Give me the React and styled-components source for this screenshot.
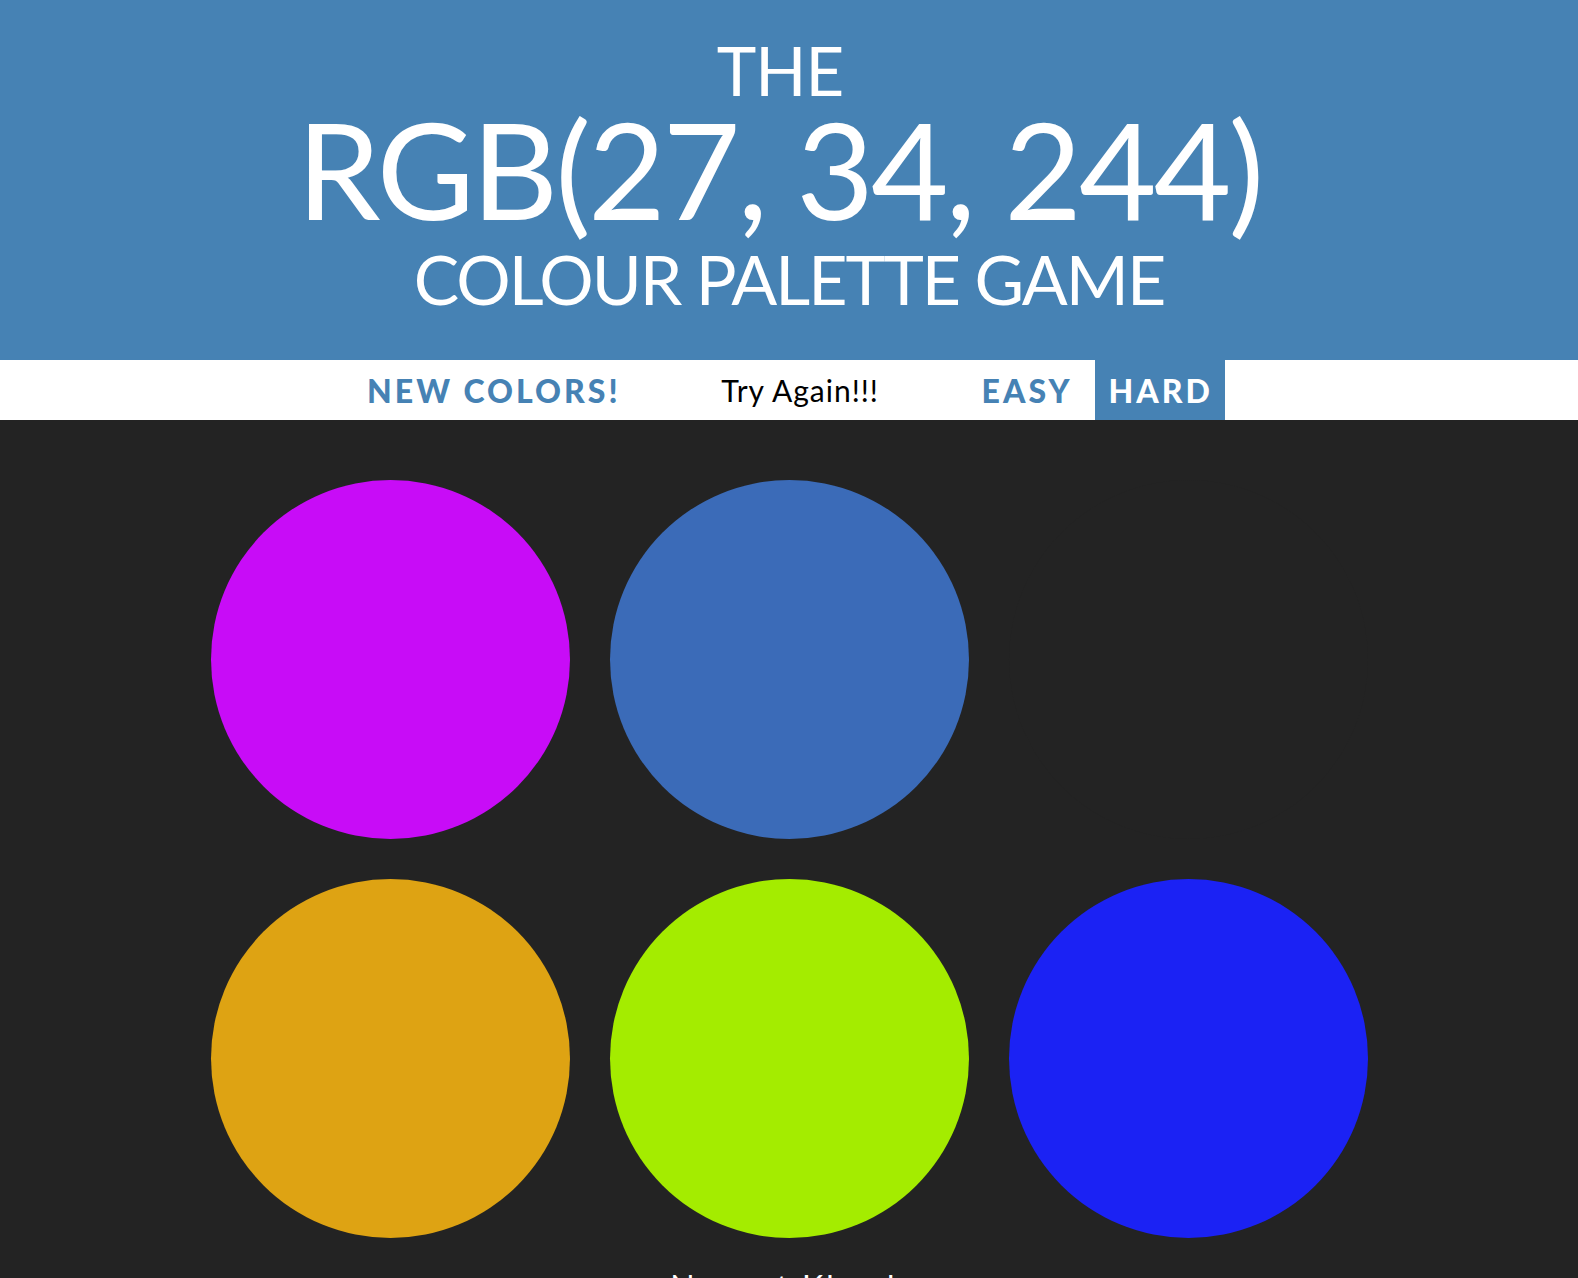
import React from 'react';
import styled, { createGlobalStyle } from 'styled-components';

const GlobalStyle = createGlobalStyle`
	body {
		margin: 0;
		background: #232323;
		font-family: Lato, "Open Sans", sans-serif;
	}
`;

const Header = styled.h1`
	margin: 0;
	padding: 33px 0 34px;
	background: steelblue;
	color: white;
	text-align: center;
	text-transform: uppercase;
	font-weight: normal;
`;

const Line = styled.span`
	display: block;
	font-size: ${(p) => p.size}px;
	line-height: ${(p) => p.lh}px;
	letter-spacing: ${(p) => p.ls || 0}px;
	padding-right: ${(p) => p.shift || 0}px;
`;

const Stripe = styled.div`
	display: flex;
	justify-content: center;
	height: 60px;
	background: white;
	gap: 10px;
`;

const Button = styled.button`
	border: none;
	padding: 0 12px 0 14px;
	height: 100%;
	font-family: Lato, sans-serif;
	font-weight: 900;
	font-size: 32px;
	letter-spacing: 3px;
	text-transform: uppercase;
	color: ${(p) => (p.selected ? 'white' : 'steelblue')};
	background: ${(p) => (p.selected ? 'steelblue' : 'none')};
	outline: none;
	cursor: pointer;
`;

const Message = styled.span`
	width: 315px;
	display: flex;
	align-items: center;
	justify-content: center;
	font-size: 30px;
	letter-spacing: 1px;
	color: black;
`;

const Board = styled.div`
	display: flex;
	flex-wrap: wrap;
	width: 1197px;
	margin: 40px auto 0;
`;

const Square = styled.div`
	width: 359px;
	height: 359px;
	margin: 20px;
	border-radius: 50%;
	background: ${(p) => p.color};
`;

const Footer = styled.p`
	margin: 0;
	padding-top: 9px;
	text-align: center;
	color: white;
	font-size: 32px;
	letter-spacing: 3px;
`;

const colors = [
	'rgb(200, 12, 247)',
	'rgb(59, 107, 184)',
	'#232323',
	'rgb(222, 163, 19)',
	'rgb(164, 236, 0)',
	'rgb(27, 34, 244)',
];

export default function App() {
	return (
		<>
			<GlobalStyle />
			<Header>
				<Line size={67} lh={74} ls={-1} shift={18}>The</Line>
				<Line size={134} lh={124} ls={-3} shift={20}>rgb(27, 34, 244)</Line>
				<Line size={68} lh={95} ls={-2}>Colour Palette Game</Line>
			</Header>
			<Stripe>
				<Button>New Colors!</Button>
				<Message>Try Again!!!</Message>
				<Button>Easy</Button>
				<Button selected>Hard</Button>
			</Stripe>
			<Board>
				{colors.map((c, i) => (
					<Square key={i} color={c} />
				))}
			</Board>
			<Footer>Nguyet Khanh</Footer>
		</>
	);
}
